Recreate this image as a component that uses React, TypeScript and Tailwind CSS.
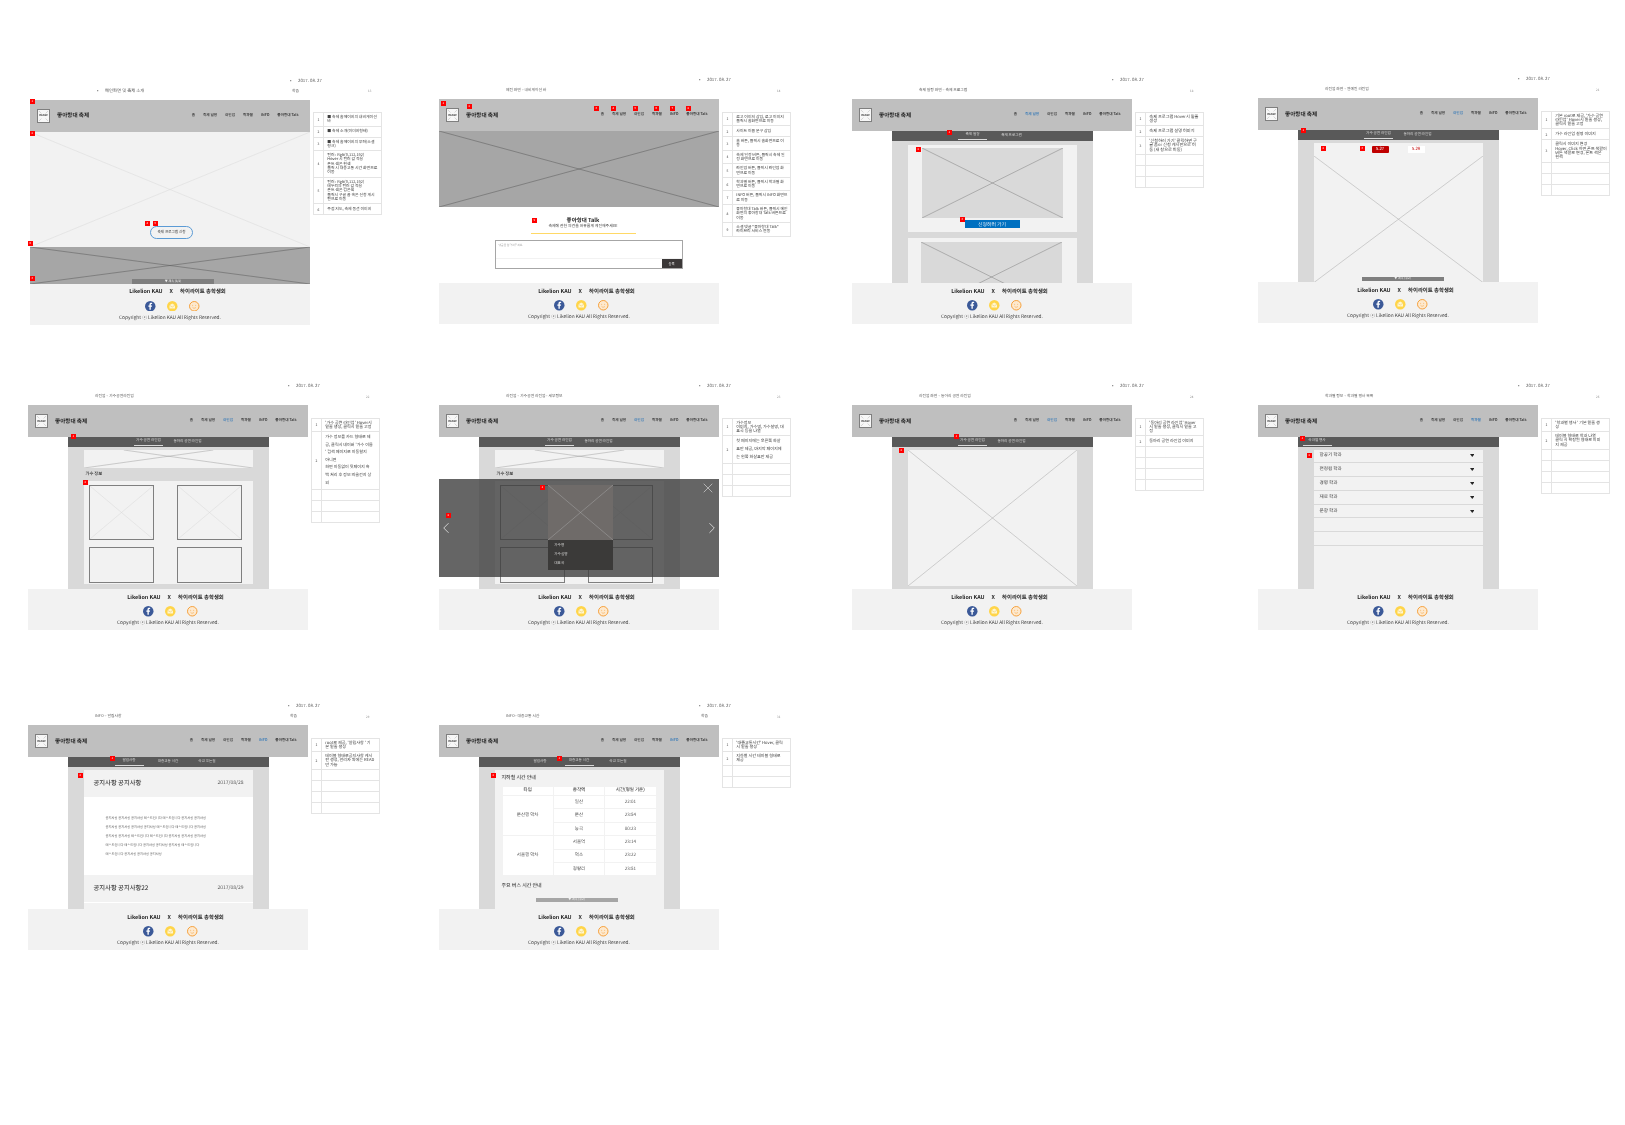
import type { ReactNode } from 'react';
import { ChevronLeft, ChevronRight, X } from 'lucide-react';

const navItems = ['홈', '축제 일정', '라인업', '학과별', 'INFO', '좋아항대 Talk'];

type Mark = { n: string; at: string };
type Note = { text: string; tall?: boolean };

function XLines({ color, width = 0.5 }: { color: string; width?: number }) {
  return (
    <svg className="absolute inset-0 h-full w-full" viewBox="0 0 100 100" preserveAspectRatio="none">
      <line x1="0" y1="0" x2="100" y2="100" stroke={color} strokeWidth={width} vectorEffect="non-scaling-stroke" />
      <line x1="0" y1="100" x2="100" y2="0" stroke={color} strokeWidth={width} vectorEffect="non-scaling-stroke" />
    </svg>
  );
}

function Logo() {
  return (
    <div className="relative flex h-[14px] w-[13px] items-center justify-center border-[0.5px] border-[#7f7f7f] bg-[#f7f7f7]">
      <svg className="absolute inset-0 h-full w-full" viewBox="0 0 13 14">
        <path d="M1 1l3 3M12 1L9 4M1 13l3-3M12 13l-3-3" stroke="#8c8c8c" strokeWidth="0.4" fill="none" />
      </svg>
      <span className="text-[2.800px] leading-none font-bold text-[#404040]">IMAGE</span>
    </div>
  );
}

function Header({ active }: { active?: string }) {
  return (
    <header className="flex h-[32px] shrink-0 items-center bg-[#bfbfbf] pr-[11.500px] pl-[7px]">
      <Logo />
      <span className="ml-[7px] text-[5.600px] font-bold text-[#262626]">좋아항대 축제</span>
      <nav className="ml-auto flex gap-[8px] text-[3.600px] font-medium text-[#262626]">
        {navItems.map((item) => (
          <span key={item} className={item === active ? 'text-[#2e75b6]' : ''}>
            {item}
          </span>
        ))}
      </nav>
    </header>
  );
}

function Footer() {
  return (
    <footer className="flex h-[41px] shrink-0 flex-col items-center bg-[#f2f2f2] pt-[4px] text-[#262626]">
      <div className="ml-[15px] flex h-[8px] items-center gap-[7px] text-[5.400px] font-bold">
        <span>Likelion KAU</span>
        <span>X</span>
        <span>하이라이트 총학생회</span>
      </div>
      <div className="mt-[5px] ml-[5px] flex gap-[11.500px]">
        <svg className="h-[10.500px] w-[10.500px]" viewBox="0 0 21 21">
          <circle cx="10.5" cy="10.5" r="10.5" fill="#3b5998" />
          <path d="M11.6 17.5v-6h2.2l.4-2.6h-2.6V7.400c0-.8.3-1.300 1.400-1.300h1.300V3.800c-.4-.1-1.200-.2-2-.2-2.100 0-3.400 1.200-3.400 3.500v1.800H6.700v2.600h2.200v6z" fill="#fff" />
        </svg>
        <svg className="h-[10.500px] w-[10.500px]" viewBox="0 0 21 21">
          <circle cx="10.500" cy="10.500" r="10.500" fill="#ffd54a" />
          <path d="M5 8.500l5.500-3.500L16 8.500V15H5z" fill="#fff6d0" />
          <path d="M5 8.500l5.500 3.500L16 8.500" fill="none" stroke="#e8b92e" strokeWidth="0.8" />
        </svg>
        <svg className="h-[10.500px] w-[10.500px]" viewBox="0 0 21 21">
          <circle cx="10.500" cy="10.500" r="9.500" fill="#fde9cf" stroke="#f59a2c" strokeWidth="1.800" />
          <circle cx="7.500" cy="8.500" r="0.900" fill="#f59a2c" />
          <circle cx="13.500" cy="8.500" r="0.900" fill="#f59a2c" />
          <path d="M7 12.500c1.500 2.500 5.500 2.500 7 0" fill="none" stroke="#f59a2c" strokeWidth="1" />
        </svg>
      </div>
      <div className="mt-[3.500px] flex h-[6px] items-center text-[4.800px] text-[#404040]">
        Copyright ⓒ Likelion KAU All Rights Reserved.
      </div>
    </footer>
  );
}

function Badge({ n, at }: Mark) {
  return (
    <span className={`absolute flex h-[5px] w-[4.500px] items-center justify-center bg-[#ff0000] text-[2.800px] leading-none text-white ${at}`}>
      {n}
    </span>
  );
}

function NotesTable({ notes, empty, size }: { notes: Note[]; empty: number; size: string }) {
  return (
    <table className={`mt-[12.500px] ml-[3px] h-fit w-[69px] table-fixed border-collapse bg-white text-[#404040] ${size}`}>
      <colgroup>
        <col className="w-[10px]" />
        <col />
      </colgroup>
      <tbody>
        {notes.map((note, i) => (
          <tr key={i}>
            <td className="h-[11px] border-[0.5px] border-[#e4e4e4] text-center text-[3.400px]">{i + 1}</td>
            <td className={`border-[0.5px] border-[#e4e4e4] py-[2px] pl-[3.300px] whitespace-pre ${note.tall ? 'leading-[7.600px]' : 'leading-[4.300px]'}`}>
              {note.text}
            </td>
          </tr>
        ))}
        {Array.from({ length: empty }).map((_, i) => (
          <tr key={i}>
            <td className="h-[11px] border-[0.5px] border-[#e4e4e4]" />
            <td className="border-[0.5px] border-[#e4e4e4]" />
          </tr>
        ))}
      </tbody>
    </table>
  );
}

function Sheet(props: {
  place: string;
  title: string;
  page: string;
  bullet?: boolean;
  study?: boolean;
  marks: Mark[];
  notes: Note[];
  empty: number;
  noteSize?: string;
  active?: string;
  children: ReactNode;
}) {
  return (
    <section className={`absolute w-[355px] ${props.place}`}>
      <div className="h-[27px] pt-[1.500px] text-[3.800px] text-[#595959]">
        <div className="flex h-[14px] items-center pl-[260px] text-[4.400px]">
          <span className="w-[8px]">•</span>
          <span>2017. 08. 27</span>
        </div>
        <div className="flex h-[7px] items-center pl-[67px]">
          <span className={`flex w-[195px] ${props.bullet ? 'text-[4.400px]' : ''}`}>
            {props.bullet && <span className="w-[8px]">•</span>}
            {props.title}
          </span>
          <span className="w-[76px]">{props.study ? '학습' : ''}</span>
          <span className="text-[3px] text-[#8c8c8c]">{props.page}</span>
        </div>
      </div>
      <div className="flex">
        <div className="relative h-[225px] w-[280px] shrink-0">
          <div className="flex h-full flex-col overflow-hidden">
            <Header active={props.active} />
            <div className="relative min-h-0 flex-1 overflow-hidden bg-white">{props.children}</div>
            <Footer />
          </div>
          {props.marks.map((m) => (
            <Badge key={m.n + m.at} {...m} />
          ))}
        </div>
        <NotesTable notes={props.notes} empty={props.empty} size={props.noteSize ?? 'text-[4.100px]'} />
      </div>
    </section>
  );
}

function SubPanel({ tabs, active, left, children }: { tabs: string[]; active: string; left?: boolean; children: ReactNode }) {
  return (
    <div className="mx-auto flex h-full w-[201px] flex-col">
      <div className={`flex h-[10px] shrink-0 items-center gap-[10px] bg-[#595959] text-[3.600px] text-[#d9d9d9] ${left ? 'pl-[5px]' : 'justify-center'}`}>
        {tabs.map((tab) => (
          <span key={tab} className={`w-[29px] pb-[1px] text-center whitespace-nowrap ${tab === active ? 'border-b-[0.5px] border-[#d9d9d9]' : ''}`}>
            {tab}
          </span>
        ))}
      </div>
      <div className="min-h-0 flex-1 overflow-hidden bg-[#d9d9d9] px-[16px] pt-[2.500px]">{children}</div>
    </div>
  );
}

function MoreBar({ className }: { className: string }) {
  return (
    <div className={`flex h-[4.500px] w-[82px] items-center justify-center text-[3px] leading-none text-[#f2f2f2] ${className}`}>
      ▼ 계속 (1/2)
    </div>
  );
}

function SingerCards() {
  return (
    <>
      <div className="relative h-[18px] bg-[#f2f2f2]">
        <svg className="absolute inset-0 h-full w-full" viewBox="0 0 170 18" preserveAspectRatio="none">
          <line x1="0" y1="18" x2="130" y2="0" stroke="#8c8c8c" strokeWidth="0.4" />
          <line x1="40" y1="0" x2="170" y2="18" stroke="#8c8c8c" strokeWidth="0.4" />
        </svg>
      </div>
      <div className="flex h-[13px] items-center pl-[2px] text-[4.300px] font-medium text-[#262626]">가수 정보</div>
      <div className="h-[103px] overflow-hidden bg-[#f2f2f2] px-[5.600px] pt-[4.700px]">
        <div className="grid grid-cols-[65px_65px] gap-x-[22.700px] gap-y-[7.300px]">
          <div className="relative h-[55px] border-[0.7px] border-[#7f7f7f]"><XLines color="#d9d9d9" /></div>
          <div className="relative h-[55px] border-[0.7px] border-[#7f7f7f]"><XLines color="#d9d9d9" /></div>
          <div className="h-[36px] border-[0.7px] border-[#7f7f7f]" />
          <div className="h-[36px] border-[0.7px] border-[#7f7f7f]" />
        </div>
      </div>
    </>
  );
}

function Notice({ title, date }: { title: string; date: string }) {
  return (
    <div className="flex h-[27px] items-center justify-between bg-[#f2f2f2] pr-[9px] pl-[10px]">
      <span className="text-[6.300px] font-medium text-[#404040]">{title}</span>
      <span className="text-[5px] text-[#595959]">{date}</span>
    </div>
  );
}

const noticeLines = [
  '공지사항 공지사항 공지사항 테스트입니다 테스트입니다 공지사항 공지사항',
  '공지사항 공지사항 공지사항 공지사항 테스트입니다 테스트입니다 공지사항',
  '공지사항 공지사항 테스트입니다 테스트입니다 공지사항 공지사항 공지사항',
  '테스트입니다 테스트입니다 공지사항 공지사항 공지사항 테스트입니다',
  '테스트입니다 공지사항 공지사항 공지사항',
];

const subway = [
  { type: '문산행 막차', rows: [['일산', '22:01'], ['문산', '23:54'], ['능곡', '00:23']] },
  { type: '서울행 막차', rows: [['서울역', '23:14'], ['덕소', '23:22'], ['청량리', '23:51']] },
];

const lineupTabs = ['가수 공연 라인업', '동아리 공연 라인업'];
const infoTabs = ['알림사항', '대중교통 시간', '학교 오는길'];
const departments = ['항공기 학과', '전정컴 학과', '경영 학과', '재료 학과', '운항 학과', '', ''];

export default function App() {
  return (
    <div className="relative h-[1125px] w-[1625px] overflow-hidden bg-white font-['Noto_Sans_CJK_KR',sans-serif] blur-[0.3px] [text-rendering:geometricPrecision]">
      {/* 메인화면 */}
      <Sheet
        place="left-[30px] top-[72.500px]"
        title="메인화면 및 축제 소개"
        bullet
        page="13"
        study
        noteSize="text-[3.900px]"
        marks={[
          { n: '1', at: 'left-0 top-[-1px]' },
          { n: '2', at: 'left-0 top-[31px]' },
          { n: '4', at: 'left-[115px] top-[121px]' },
          { n: '5', at: 'left-[123px] top-[121px]' },
          { n: '6', at: 'left-[-2px] top-[141px]' },
          { n: '3', at: 'left-0 top-[176px]' },
        ]}
        notes={[
          { text: '■ 축제 홈페이지의 내비게이션\n바' },
          { text: '■ 축제 소개(이미지형태)' },
          { text: '■ 축제 홈페이지의 푸터(소셜\n링크)' },
          { text: '컬러 : Rgb(0,112,192)\nHover 시 컬러 값 적용\n폰트 색은 흰색\n클릭 시 대중교통 시간 화면으로\n이동' },
          { text: '컬러 : Rgb(0,112,192)\n테두리의 컬러 값 적용\n폰트 색은 검은색\n클릭시 구글 폼 혹은 신청 게시\n판으로 이동' },
          { text: '주점 지도, 축제 동선 이미지' },
        ]}
        empty={0}
      >
        <div className="relative h-[115px] bg-[#f2f2f2]">
          <XLines color="#d9d9d9" />
          <button className="absolute top-[94px] left-[120px] h-[13px] w-[43px] rounded-full border-[0.7px] border-[#5b9bd5] text-[3.600px] text-[#404040]">
            축제 프로그램 신청
          </button>
        </div>
        <div className="relative h-[37px] bg-[#a6a6a6]">
          <XLines color="#595959" />
          <MoreBar className="absolute bottom-0 left-[102px] bg-[#7f7f7f]" />
        </div>
      </Sheet>

      {/* 내비게이션 바 */}
      <Sheet
        place="left-[439px] top-[72px]"
        title="메인 화면 – 내비게이션 바"
        page="14"
        noteSize="text-[3.900px]"
        marks={[
          { n: '1', at: 'left-[2px] top-[2px]' },
          { n: '2', at: 'left-[28px] top-[5px]' },
          { n: '3', at: 'left-[155px] top-[7px]' },
          { n: '4', at: 'left-[172px] top-[7px]' },
          { n: '5', at: 'left-[194px] top-[7px]' },
          { n: '6', at: 'left-[215px] top-[7px]' },
          { n: '7', at: 'left-[231px] top-[7px]' },
          { n: '8', at: 'left-[247px] top-[7px]' },
          { n: '9', at: 'left-[93px] top-[119px]' },
        ]}
        notes={[
          { text: '로고 이미지 삽입, 로고 이미지\n클릭시 홈화면으로 이동' },
          { text: '사이트 이름 문구 삽입' },
          { text: '홈 버튼, 클릭시 홈화면으로 이\n동' },
          { text: '축제 일정 버튼, 클릭시 축제 일\n정 화면으로 이동' },
          { text: '라인업 버튼, 클릭시 라인업 화\n면으로 이동' },
          { text: '학과별 버튼, 클릭시 학과별 화\n면으로 이동' },
          { text: 'INFO 버튼, 클릭시 INFO 화면으\n로 이동' },
          { text: '좋아항대 Talk 버튼, 클릭시 메인\n화면의 좋아항대 Talk 버튼으로\n이동' },
          { text: '소셜 댓글 "좋아항대 Talk"\n라이브리 서비스 연동' },
        ]}
        empty={0}
      >
        <div className="relative h-[76px] bg-[#a6a6a6]">
          <XLines color="#595959" />
        </div>
        <div className="flex flex-col items-center pt-[10px] pl-[8px] text-[#262626]">
          <div className="text-[5.500px] leading-[6px] font-bold">좋아항대 Talk</div>
          <div className="text-[3.900px] leading-[6px] text-[#404040]">축제에 관한 의견을 자유롭게 게진해주세요!</div>
          <div className="mt-[3.500px] h-[1.500px] w-[105px] bg-[#ffd966]" />
        </div>
        <div className="mt-[5.500px] ml-[55.500px] flex h-[29px] w-[188px] flex-col justify-between border-[1px] border-[#a6a6a6]">
          <div className="px-[3px] pt-[2.500px] text-[2.800px] text-[#a6a6a6]">댓글을 입력해주세요.</div>
          <div className="flex h-[9.500px] justify-end border-t-[0.5px] border-[#f2f2f2]">
            <span className="flex w-[20px] items-center justify-center bg-[#3b3838] text-[3.400px] text-white">등록</span>
          </div>
        </div>
      </Sheet>

      {/* 축제 프로그램 */}
      <Sheet
        place="left-[852px] top-[72px]"
        title="축제 일정 화면 – 축제 프로그램"
        page="18"
        active="축제 일정"
        noteSize="text-[4.200px]"
        marks={[
          { n: '1', at: 'left-[95px] top-[31px]' },
          { n: '2', at: 'left-[64px] top-[48px]' },
          { n: '3', at: 'left-[108px] top-[118px]' },
        ]}
        notes={[
          { text: '축제 프로그램 Hover시 밑줄\n생성' },
          { text: '축제 프로그램 설명 이미지' },
          { text: "'신청하러 가기' 클릭하면 구\n글 폼or 신청 게시판으로 이\n동 (새 창으로 이동)" },
        ]}
        empty={3}
      >
        <SubPanel tabs={['축제 일정', '축제 프로그램']} active="축제 일정">
          <div className="mt-[1px] flex h-[87px] flex-col items-center bg-[#f2f2f2] pt-[3.300px]">
            <div className="relative h-[70px] w-[141px] bg-[#d9d9d9]">
              <XLines color="#7f7f7f" />
            </div>
            <div className="mt-[2.700px] flex h-[8px] w-[55px] items-center justify-center bg-[#0070c0] text-[4.900px] text-[#dbe9f5]">
              신청하러 가기
            </div>
          </div>
          <div className="mt-[6px] h-[60px] bg-[#f2f2f2] pt-[4.300px] pl-[13px]">
            <div className="relative h-[70px] w-[141px] bg-[#d9d9d9]">
              <XLines color="#7f7f7f" />
            </div>
          </div>
        </SubPanel>
      </Sheet>

      {/* 연예인 라인업 */}
      <Sheet
        place="left-[1258px] top-[71px]"
        title="라인업 화면 – 연예인 라인업"
        page="21"
        active="라인업"
        marks={[
          { n: '1', at: 'left-[43px] top-[30px]' },
          { n: '2', at: 'left-[63px] top-[48px]' },
          { n: '3', at: 'left-[102px] top-[48px]' },
        ]}
        notes={[
          { text: "기본 root로 제공, '가수 공연\n라인업' Hover시 밑줄 생성,\n클릭시 밑줄 고정" },
          { text: '가수 라인업 설명 이미지' },
          { text: '클릭시 이미지 변경\nHover, Click 하면 폰트 색깔이\n버튼 색깔로 변경, 폰트 색은\n흰색' },
        ]}
        empty={3}
      >
        <SubPanel tabs={lineupTabs} active="가수 공연 라인업">
          <div className="relative flex h-full flex-col bg-[#f2f2f2]">
            <div className="flex h-[13px] shrink-0 items-center justify-center gap-[19px] text-[4.400px]">
              <span className="flex h-[7px] w-[17px] items-center justify-center rounded-[1px] bg-[#c00000] text-white">5.27</span>
              <span className="flex h-[7px] w-[17px] items-center justify-center bg-white text-[#c00000]">5.28</span>
            </div>
            <div className="relative flex-1">
              <XLines color="#a6a6a6" />
            </div>
            <MoreBar className="absolute bottom-[1px] left-[48px] bg-[#7f7f7f]" />
          </div>
        </SubPanel>
      </Sheet>

      {/* 가수공연 라인업 */}
      <Sheet
        place="left-[28px] top-[378px]"
        title="라인업 – 가수공연라인업"
        page="22"
        active="라인업"
        marks={[
          { n: '1', at: 'left-[43px] top-[29px]' },
          { n: '2', at: 'left-[55px] top-[75px]' },
        ]}
        notes={[
          { text: "'가수 공연 라인업' Hover시\n밑줄 생성, 클릭시 밑줄 고정" },
          { text: "가수 정보를 카드 형태로 제\n공, 클릭시 네이버 '가수 이름\n' 검색 페이지로 이동할지\n아니면\n화면 이동없이 뒷페이지 흑\n백 처리 후 정보 띄울건지 상\n의", tall: true },
        ]}
        empty={3}
      >
        <SubPanel tabs={lineupTabs} active="가수 공연 라인업">
          <SingerCards />
        </SubPanel>
      </Sheet>

      {/* 세부정보 */}
      <Sheet
        place="left-[439px] top-[378px]"
        title="라인업 – 가수공연 라인업– 세부정보"
        page="23"
        active="라인업"
        marks={[
          { n: '1', at: 'left-[101px] top-[80px]' },
          { n: '2', at: 'left-[7px] top-[108px]' },
        ]}
        notes={[
          { text: '가수정보\n이미지, 가수명, 가수설명, 대\n표곡 등을 나열' },
          { text: '첫 페이지에는 오른쪽 화살\n표만 제공, 마지막 페이지에\n는 왼쪽 화살표만 제공', tall: true },
        ]}
        empty={3}
      >
        <SubPanel tabs={lineupTabs} active="가수 공연 라인업">
          <SingerCards />
        </SubPanel>
        <div className="absolute top-[42.300px] left-0 h-[98px] w-full bg-[#3f3f3f]/80">
          <X className="absolute top-[1px] right-[3px] text-[#d9d9d9]" size={16} strokeWidth={1} />
          <ChevronLeft className="absolute top-[40px] left-[-2px] text-[#d9d9d9]" size={18} strokeWidth={1.2} />
          <ChevronRight className="absolute top-[40px] right-[-2px] text-[#d9d9d9]" size={18} strokeWidth={1.2} />
          <div className="absolute top-[5.700px] left-[109.300px] w-[65px]">
            <div className="relative h-[55px] bg-[#6f6b69]">
              <XLines color="#a6a6a6" />
            </div>
            <div className="flex h-[30px] flex-col justify-center gap-[5px] bg-[#3b3a39] pl-[6px] text-[3.600px] leading-[4px] text-[#d9d9d9]">
              <span>가수명</span>
              <span>가수설명</span>
              <span>대표곡</span>
            </div>
          </div>
        </div>
      </Sheet>

      {/* 동아리 공연 라인업 */}
      <Sheet
        place="left-[852px] top-[378px]"
        title="라인업 화면 – 동아리 공연 라인업"
        page="24"
        active="라인업"
        marks={[
          { n: '1', at: 'left-[102px] top-[29px]' },
          { n: '2', at: 'left-[47px] top-[43px]' },
        ]}
        notes={[
          { text: "'동아리 공연 라인업' Hover\n시 밑줄 생성, 클릭시 밑줄 고\n정" },
          { text: '동아리 공연 라인업 이미지' },
        ]}
        empty={4}
      >
        <SubPanel tabs={lineupTabs} active="가수 공연 라인업">
          <div className="relative h-[136px] bg-[#f2f2f2]">
            <XLines color="#a6a6a6" />
          </div>
        </SubPanel>
      </Sheet>

      {/* 학과별 행사 */}
      <Sheet
        place="left-[1258px] top-[378px]"
        title="학과별 정보 – 학과별 행사 목록"
        page="26"
        active="학과별"
        marks={[
          { n: '1', at: 'left-[42px] top-[31px]' },
          { n: '2', at: 'left-[49px] top-[48px]' },
        ]}
        notes={[
          { text: "'학과별 행사 ' 기본 밑줄 생\n성" },
          { text: '테이블 형태로 학과 나열\n클릭 시 확장된 형태로 이미\n지 제공' },
        ]}
        empty={4}
      >
        <SubPanel tabs={['학과별 행사']} active="학과별 행사" left>
          <div className="h-full bg-[#f2f2f2]">
            {departments.map((dept, i) => (
              <div key={i} className="flex h-[13.800px] items-center justify-between border-b-[1px] border-[#d9d9d9] pr-[8.500px] pl-[6px] text-[4.600px] text-[#404040]">
                <span>{dept}</span>
                {dept && (
                  <svg className="h-[3px] w-[4.500px]" viewBox="0 0 9 6">
                    <path d="M0 0h9L4.500 6z" fill="#262626" />
                  </svg>
                )}
              </div>
            ))}
          </div>
        </SubPanel>
      </Sheet>

      {/* 알림사항 */}
      <Sheet
        place="left-[28px] top-[698px]"
        title="INFO – 알림사항"
        page="29"
        study
        active="INFO"
        marks={[
          { n: '1', at: 'left-[82px] top-[31px]' },
          { n: '2', at: 'left-[50px] top-[48px]' },
        ]}
        notes={[
          { text: "root로 제공, '알림사항 ' 기\n본 밑줄 생성" },
          { text: '테이블 형태로공지사항 게시\n판 생성, 관리자 외에는 READ\n만 가능' },
        ]}
        empty={4}
      >
        <SubPanel tabs={infoTabs} active="알림사항">
          <Notice title="공지사항 공지사항" date="2017/08/28" />
          <div className="flex h-[78px] flex-col bg-white pt-[16px] pl-[22px] text-[3.270px] leading-[9px] whitespace-pre text-[#595959]">
            {noticeLines.map((line) => (
              <span key={line}>{line}</span>
            ))}
          </div>
          <Notice title="공지사항 공지사항22" date="2017/08/29" />
          <div className="h-[10px] border-t-[0.5px] border-white bg-[#f2f2f2]" />
        </SubPanel>
      </Sheet>

      {/* 대중교통 시간 */}
      <Sheet
        place="left-[439px] top-[698px]"
        title="INFO– 대중교통 시간"
        page="31"
        study
        active="INFO"
        marks={[
          { n: '1', at: 'left-[118px] top-[31px]' },
          { n: '2', at: 'left-[52px] top-[48px]' },
        ]}
        notes={[
          { text: "'대중교통시간' Hover, 클릭\n시 밑줄 생성" },
          { text: '지하철 시간 테이블 형태로\n제공' },
        ]}
        empty={2}
      >
        <SubPanel tabs={infoTabs} active="대중교통 시간">
          <div className="relative h-full bg-[#f2f2f2] px-[7px] pt-[4px]">
            <div className="h-[8px] text-[5px] leading-[8px] font-medium text-[#404040]">지하철 시간 안내</div>
            <table className="mt-[4px] h-[90px] w-[155px] table-fixed border-collapse bg-white text-center text-[4.500px] text-[#595959]">
              <thead>
                <tr className="h-[9.500px] text-[#404040]">
                  <th className="border-[0.7px] border-[#f2f2f2] font-medium">타입</th>
                  <th className="border-[0.7px] border-[#f2f2f2] font-medium">종착역</th>
                  <th className="border-[0.7px] border-[#f2f2f2] font-medium">시간(평일 기준)</th>
                </tr>
              </thead>
              <tbody>
                {subway.map((group) =>
                  group.rows.map((row, i) => (
                    <tr key={row[0]} className="h-[13.400px]">
                      {i === 0 && (
                        <td rowSpan={3} className="border-[0.7px] border-[#f2f2f2]">
                          {group.type}
                        </td>
                      )}
                      <td className="border-[0.7px] border-[#f2f2f2]">{row[0]}</td>
                      <td className="border-[0.7px] border-[#f2f2f2]">{row[1]}</td>
                    </tr>
                  ))
                )}
              </tbody>
            </table>
            <div className="mt-[6px] text-[5px] leading-[8px] font-medium text-[#404040]">주요 버스 시간 안내</div>
            <MoreBar className="absolute bottom-[7px] left-[41px] bg-[#a6a6a6]" />
          </div>
        </SubPanel>
      </Sheet>
    </div>
  );
}
